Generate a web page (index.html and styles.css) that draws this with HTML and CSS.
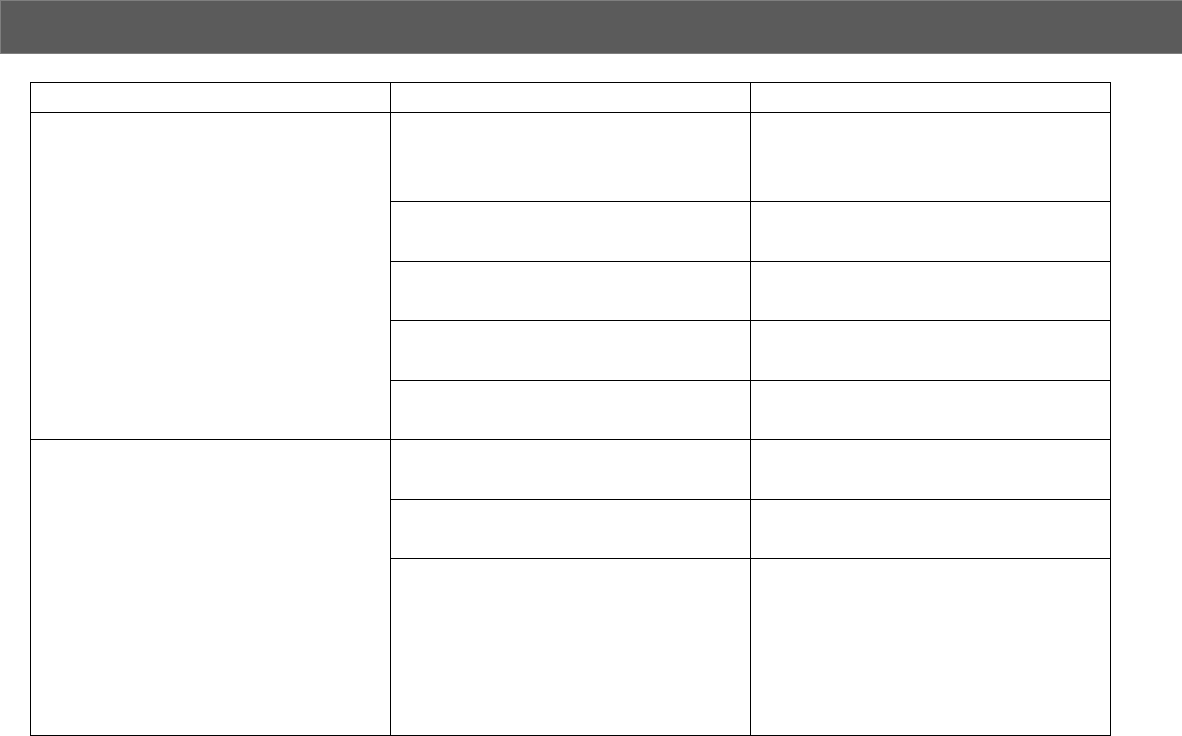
FILE: index.html
```html
<!DOCTYPE html>
<html lang="en">
<head>
<meta charset="utf-8">
<title>Table</title>
<link rel="stylesheet" href="styles.css">
</head>
<body>
<header class="topbar"></header>
<main class="content">
  <table class="grid">
    <colgroup>
      <col class="col">
      <col class="col">
      <col class="col">
    </colgroup>
    <thead>
      <tr class="r-head"><th></th><th></th><th></th></tr>
    </thead>
    <tbody>
      <tr class="r-tall"><td rowspan="5"></td><td></td><td></td></tr>
      <tr class="r-a"><td></td><td></td></tr>
      <tr class="r-b"><td></td><td></td></tr>
      <tr class="r-a"><td></td><td></td></tr>
      <tr class="r-b"><td></td><td></td></tr>
      <tr class="r-a"><td rowspan="3"></td><td></td><td></td></tr>
      <tr class="r-b"><td></td><td></td></tr>
      <tr class="r-last"><td></td><td></td></tr>
    </tbody>
  </table>
</main>
</body>
</html>
```
FILE: styles.css
```css
html, body {
  margin: 0;
  padding: 0;
  background: #ffffff;
  font-family: "Liberation Sans", Arial, sans-serif;
}
.topbar {
  box-sizing: border-box;
  height: 54px;
  background: #5b5b5b;
  border-top: 1px solid #7f7f7f;
  border-left: 1px solid #7f7f7f;
  border-bottom: 1px solid #7f7f7f;
}
.content {
  padding: 28px 0 0 30px;
}
.grid {
  border-collapse: collapse;
  table-layout: fixed;
  width: 1081px;
}
.col {
  width: 360px;
}
.grid th,
.grid td {
  border: 1px solid #000000;
  padding: 0;
}
.r-head { height: 30px; }
.r-tall { height: 89px; }
.r-a { height: 60px; }
.r-b { height: 59px; }
.r-last { height: 177px; }
```
